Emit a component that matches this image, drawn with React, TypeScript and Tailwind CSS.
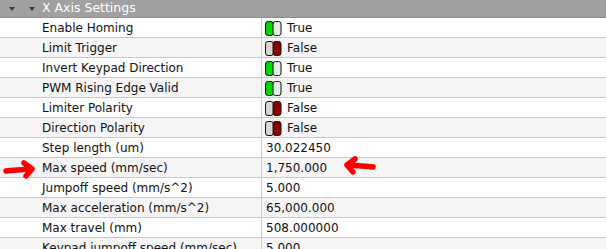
import React from 'react'

type Row = { name: string; value: string; toggle?: boolean }

const rows: Row[] = [
    { name: 'Enable Homing', value: 'True', toggle: true },
    { name: 'Limit Trigger', value: 'False', toggle: true },
    { name: 'Invert Keypad Direction', value: 'True', toggle: true },
    { name: 'PWM Rising Edge Valid', value: 'True', toggle: true },
    { name: 'Limiter Polarity', value: 'False', toggle: true },
    { name: 'Direction Polarity', value: 'False', toggle: true },
    { name: 'Step length (um)', value: '30.022450' },
    { name: 'Max speed (mm/sec)', value: '1,750.000' },
    { name: 'Jumpoff speed (mm/s^2)', value: '5.000' },
    { name: 'Max acceleration (mm/s^2)', value: '65,000.000' },
    { name: 'Max travel (mm)', value: '508.000000' },
    { name: 'Keypad jumpoff speed (mm/sec)', value: '5.000' },
]

const Toggle = ({ on }: { on: boolean }) => (
    <svg width="17" height="15" viewBox="0 0 17 15" className="shrink-0">
        <rect
            x="0.5"
            y="0.5"
            width="8"
            height="14"
            rx="2.5"
            fill={on ? '#00d800' : '#ddd4d4'}
            stroke="#111"
        />
        <rect
            x="8"
            y="0.5"
            width="8"
            height="14"
            rx="2.5"
            fill={on ? '#e6efe6' : '#8a0000'}
            stroke="#111"
        />
    </svg>
)

const Arrow = ({ flip }: { flip?: boolean }) => (
    <svg
        width="36"
        height="22"
        viewBox="0 0 36 22"
        style={flip ? { transform: 'scaleX(-1)' } : undefined}
    >
        <path
            d="M4 12 C10 11 18 11 27 10 M22 4 L30 10 L24 17"
            fill="none"
            stroke="#ff0000"
            strokeWidth="5.5"
            strokeLinecap="round"
            strokeLinejoin="round"
        />
    </svg>
)

const App = () => {
    return (
        <div
            className="relative w-[606px] h-[249px] overflow-hidden bg-white text-[12px] text-[#111]"
            style={{ fontFamily: '"DejaVu Sans", sans-serif' }}
        >
            <div className="flex items-center h-[18px] bg-[#a0a0a0] border-b border-[#909090]">
                <span className="w-[21px] flex justify-center pl-[2px]">
                    <span className="border-x-[3.5px] border-x-transparent border-t-[4px] border-t-[#3a3a3a]" />
                </span>
                <span className="w-[21px] flex justify-center">
                    <span className="border-x-[3.5px] border-x-transparent border-t-[4px] border-t-[#3a3a3a]" />
                </span>
                <span className="text-[12.5px] text-white">X Axis Settings</span>
            </div>
            {rows.map((r, i) => (
                <div
                    key={i}
                    className={`flex h-[20px] border-b border-[#c8c8c8] ${
                        i % 2 === 1 ? 'bg-[#f5f5f5]' : 'bg-white'
                    }`}
                >
                    <div className="w-[262px] pl-[42px] pt-[1px] border-r border-[#c8c8c8] flex items-center">
                        {r.name}
                    </div>
                    <div className="flex-1 pl-[3px] pt-[1px] flex items-center gap-[5px]">
                        {r.toggle && <Toggle on={r.value === 'True'} />}
                        <span className={r.toggle ? '' : 'pl-[1px]'}>{r.value}</span>
                    </div>
                </div>
            ))}
            <div className="absolute left-[2px] top-[159px]">
                <Arrow />
            </div>
            <div className="absolute left-[341px] top-[155px]">
                <Arrow flip />
            </div>
        </div>
    )
}

export default App
